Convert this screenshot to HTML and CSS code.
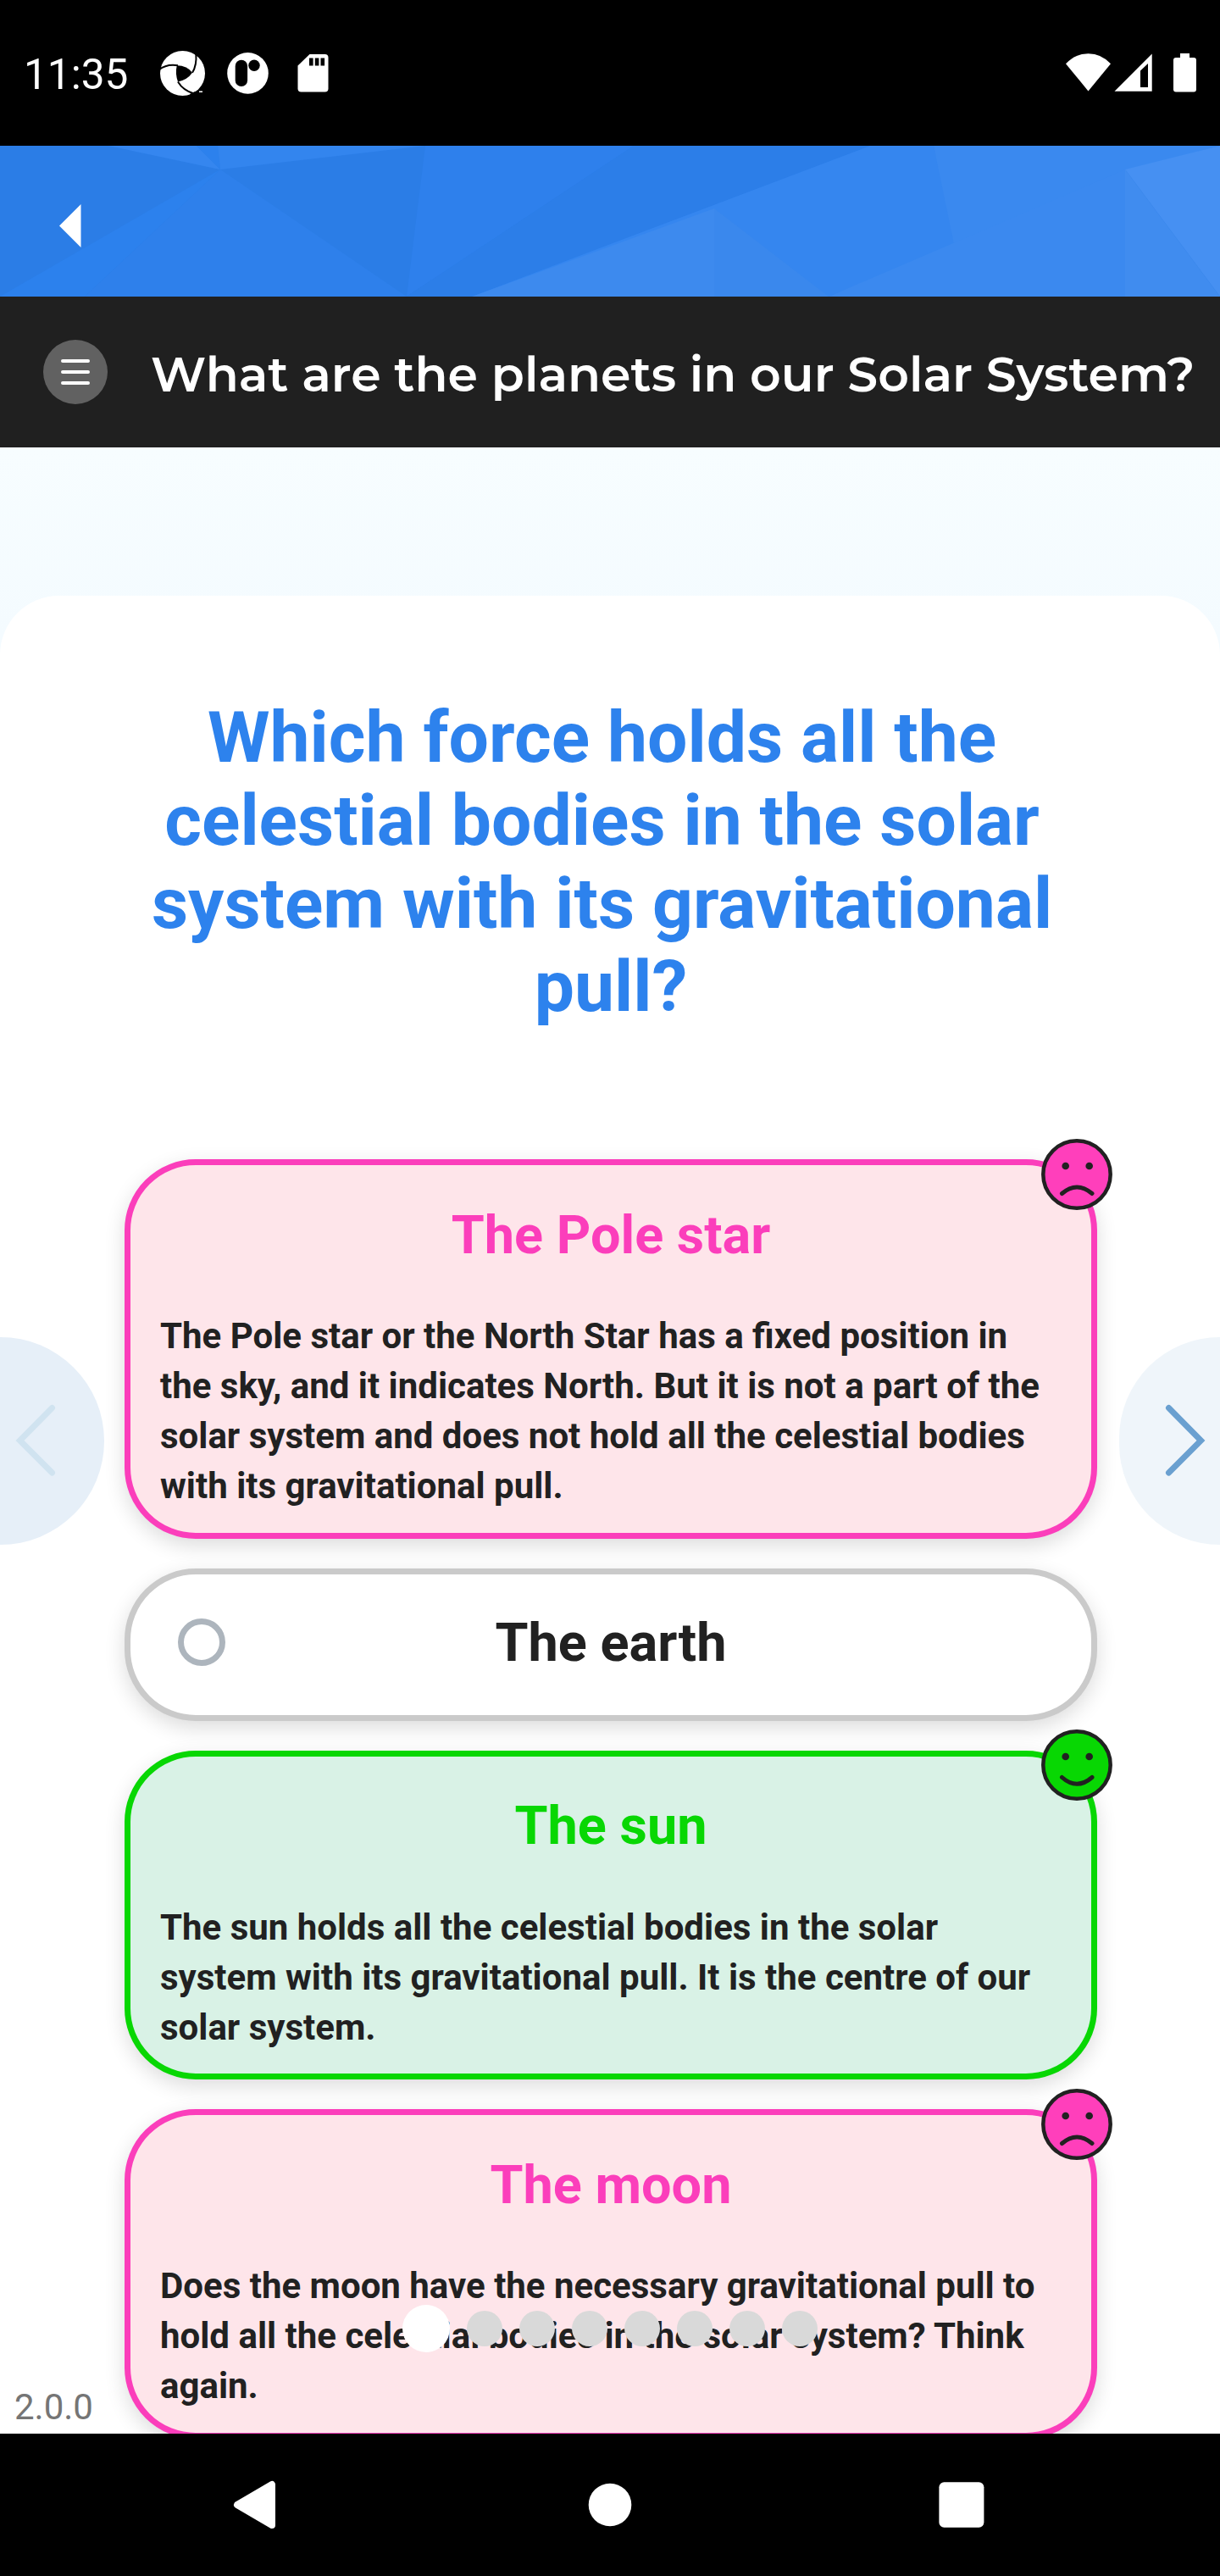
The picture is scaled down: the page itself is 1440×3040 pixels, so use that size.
FILE: index.html
```html
<!DOCTYPE html>
<html lang="en">
<head>
<meta charset="utf-8">
<title>What are the planets in our Solar System?</title>
<link rel="stylesheet" href="styles.css">
</head>
<body>
<svg class="defs" aria-hidden="true">
  <symbol id="sad" viewBox="0 0 84 84">
    <circle cx="42" cy="42" r="39.7" fill="#ff3fbb" stroke="#212121" stroke-width="4.5"/>
    <circle cx="28.7" cy="32" r="4.3" fill="#212121"/><circle cx="56.7" cy="32" r="4.3" fill="#212121"/>
    <path d="M24.5 64.5Q42 49.5 60 64.5" fill="none" stroke="#212121" stroke-width="5" stroke-linecap="round"/>
  </symbol>
  <symbol id="happy" viewBox="0 0 84 84">
    <circle cx="42" cy="42" r="39.7" fill="#08d703" stroke="#212121" stroke-width="4.5"/>
    <circle cx="28.7" cy="32" r="4.3" fill="#212121"/><circle cx="56.7" cy="32" r="4.3" fill="#212121"/>
    <path d="M24.5 56.5Q42 72 60 56.5" fill="none" stroke="#212121" stroke-width="5" stroke-linecap="round"/>
  </symbol>
</svg>

<header class="status">
  <span class="time">11:35</span>
  <svg class="status-left" width="210" height="60" viewBox="186 56 210 60">
    <circle cx="215.5" cy="86.5" r="26.5" fill="#fff"/>
    <path d="M208.8 77.3Q221 77.5 227 85.8Q221 94.5 210 96.4Q206.5 87 208.8 77.3Z"/>
    <path d="M187.5 82.5Q197 75 210 77.3M231.3 63Q232.5 77 227 85.8M210 96.4Q216 106.5 229 110.5" fill="none" stroke="#000" stroke-width="2"/>
    <path d="M224 111L230 108L240 107L236 114L226 116Z"/>
    <path d="M235 107.5h4v1.5h-4z" fill="#fff"/>
    <circle cx="292.5" cy="86.4" r="24.3" fill="#fff"/>
    <rect x="277.7" y="70.7" width="14.4" height="31.4" rx="7.2"/>
    <circle cx="300" cy="77.3" r="6.7"/>
    <path d="M365.5 64H383.5a4 4 0 0 1 4 4V104.5a4 4 0 0 1-4 4H355.5a4 4 0 0 1-4-4V77.5Z" fill="#fff"/>
    <path d="M365 68.5h4.6v9h-4.6zM371.8 68.5h4.6v9h-4.6zM378.5 68.5h4.6v9h-4.6z"/>
  </svg>
  <svg class="status-right" width="160" height="60" viewBox="1256 56 160 60" fill="#fff">
    <path d="M1284.5 107.4L1258 75.3Q1269 63.2 1284.5 63.2T1311 75.3Z"/>
    <path fill-rule="evenodd" d="M1315.5 107.7L1359.7 63.5V107.7ZM1346 103H1355V75L1346 83.5Z"/>
    <path d="M1393 63h11v5h5a3 3 0 0 1 3 3v34.5a3 3 0 0 1-3 3h-21a3 3 0 0 1-3-3V71a3 3 0 0 1 3-3h5z"/>
  </svg>
</header>

<nav class="appbar">
  <svg width="1440" height="178" viewBox="0 0 1440 178">
    <path fill="#2b7de6" d="M0 0h1440v178H0z"/>
    <path fill="#3586ef" d="M128 0H232L260 28Z"/>
    <path fill="#2c81ed" d="M232 0H257L260 28Z"/>
    <path fill="#3385ee" d="M257 0H502L260 28Z"/>
    <path fill="#2c81ed" d="M0 178L260 28L100 178Z"/>
    <path fill="#2e80eb" d="M100 178L260 28L480 178Z"/>
    <path fill="#2e80ec" d="M502 0H748L480 178Z"/>
    <path fill="#2c7ee8" d="M748 0H1027L557 178H480Z"/>
    <path fill="#3586ef" d="M1027 0H1102L1130 116L978 178H557Z"/>
    <path fill="#3d8aee" d="M557 178L843 74V178Z"/>
    <path fill="#3a88ed" d="M843 74V178H978Z"/>
    <path fill="#3a89ef" d="M1102 0H1440L1328 30L1126 116Z"/>
    <path fill="#3b89ef" d="M978 178L1328 28V178Z"/>
    <path fill="#4690f2" d="M1440 0V178L1328 28Z"/>
    <path fill="#408cef" d="M1328 28V178H1440Z"/>
    <path fill="#fff" d="M95.5 69V120L70 94.5Z"/>
  </svg>
</nav>

<div class="titlebar">
  <span class="menu"><i></i><i></i><i></i></span>
  <h1>What are the planets in our Solar System?</h1>
</div>

<main class="stage">
  <section class="sheet">
    <h2>Which force holds all the&nbsp;<br>celestial bodies in the solar&nbsp;<br>system with its gravitational&nbsp;<br>pull?</h2>
    <div class="answers">
      <article class="card wrong">
        <svg class="face"><use href="#sad"/></svg>
        <h3>The Pole star</h3>
        <p>The Pole star or the North Star has a fixed position in<br>the sky, and it indicates North. But it is not a part of the<br>solar system and does not hold all the celestial bodies<br>with its gravitational pull.</p>
      </article>
      <article class="card plain">
        <span class="radio"></span>
        <h3>The earth</h3>
      </article>
      <article class="card right">
        <svg class="face"><use href="#happy"/></svg>
        <h3>The sun</h3>
        <p>The sun holds all the celestial bodies in the solar<br>system with its gravitational pull. It is the centre of our<br>solar system.</p>
      </article>
      <article class="card wrong">
        <svg class="face"><use href="#sad"/></svg>
        <h3>The moon</h3>
        <p>Does the moon have the necessary gravitational pull to<br>hold all the celestial bodies in the solar system? Think<br>again.</p>
      </article>
    </div>
  </section>
  <div class="pager prev"><svg width="123" height="245"><path d="M61.5 83.5L23.5 122L61.5 160"/></svg></div>
  <div class="pager next"><svg width="119" height="245"><path d="M58.5 83.5L96.5 122L58.5 160"/></svg></div>
  <div class="dots"><i class="on"></i><i></i><i></i><i></i><i></i><i></i><i></i><i></i></div>
  <span class="version">2.0.0</span>
</main>

<footer class="system">
  <svg width="1440" height="168" viewBox="0 2872 1440 168" fill="#fff">
    <path d="M280 2956L321 2932V2980Z" stroke="#fff" stroke-width="8" stroke-linejoin="round"/>
    <circle cx="720" cy="2956" r="25.3"/>
    <rect x="1108.4" y="2929.3" width="53" height="53.5" rx="6"/>
  </svg>
</footer>
</body>
</html>
```
FILE: styles.css
```css
* { box-sizing: border-box; }
body {
  margin: 0;
  width: 1440px;
  height: 3040px;
  display: flex;
  flex-direction: column;
  overflow: hidden;
  background: #000;
  font-family: Roboto, sans-serif;
  color: #212121;
}
svg { display: block; }
h1, h2, h3, p { margin: 0; }
.defs { position: absolute; width: 0; height: 0; }

.status {
  height: 172px;
  padding: 0 24px 0 28px;
  display: flex;
  align-items: center;
  color: #fff;
}
.time { width: 158px; font-size: 49.5px; line-height: 58px; padding-top: 3px; }
.status-right { margin-left: auto; }

.appbar { height: 178px; }

.titlebar {
  height: 178px;
  padding-left: 51px;
  display: flex;
  align-items: center;
  background: #202020;
}
.menu {
  width: 76px;
  height: 76px;
  border-radius: 50%;
  background: #616161;
  display: flex;
  flex-direction: column;
  align-items: center;
  justify-content: center;
  gap: 9.3px;
}
.menu i { width: 34px; height: 3.5px; border-radius: 2px; background: #fff; }
.titlebar h1 {
  margin-left: 51px;
  padding-top: 5px;
  color: #fff;
  font: 600 57px/70px Montserrat, Inter, sans-serif;
  white-space: nowrap;
}

.stage {
  position: relative;
  height: 2344px;
  padding-top: 175px;
  overflow: hidden;
  background: linear-gradient(#f7fdff, #f4fbff 220px);
}
.sheet {
  height: 2400px;
  padding: 119px 145px 0 147px;
  border-radius: 70px 70px 0 0;
  background: #fff;
}
.sheet h2 {
  color: #2d82ed;
  font-size: 84px;
  line-height: 98px;
  font-weight: 700;
  text-align: center;
  white-space: nowrap;
}
.answers {
  margin-top: 154px;
  display: flex;
  flex-direction: column;
  gap: 35px;
}
.card {
  position: relative;
  border: 7px solid;
  border-radius: 84px;
  padding: 38.5px 35px 25.5px;
  box-shadow: 0 8px 24px rgba(0, 0, 0, .14);
}
.card h3 {
  font-size: 63px;
  line-height: 88px;
  font-weight: 700;
  text-align: center;
}
.card p {
  margin-top: 45.5px;
  font-size: 42px;
  line-height: 59px;
  font-weight: 700;
  color: #212121;
  white-space: nowrap;
}
.wrong { border-color: #fb3ebb; background: #fee5ea; color: #fb3ebb; }
.right { border-color: #08d703; background: #d9f2e6; color: #08d703; }
.plain {
  height: 180px;
  padding: 0 56px 6px;
  border-color: #cacaca;
  background: #fff;
  display: flex;
  align-items: center;
}
.plain h3 { flex: 1; margin-right: 56px; padding-top: 3px; }
.radio { width: 56px; height: 56px; border: 7px solid #adb5bd; border-radius: 50%; }
.face { position: absolute; top: -31.5px; right: -25px; width: 84px; height: 84px; }

.pager { position: absolute; top: 1049.5px; height: 245px; }
.pager path { fill: none; stroke-width: 7; stroke-linecap: round; stroke-linejoin: miter; }
.prev { left: 0; border-radius: 0 123px 123px 0; background: #e6eff8; }
.prev path { stroke: #d0e3f0; }
.next { right: 0; border-radius: 123px 0 0 123px; background: #eff5fa; }
.next path { stroke: #6aa0d0; }

.dots {
  position: absolute;
  top: 2192px;
  left: 475px;
  display: flex;
  align-items: center;
  gap: 20px;
}
.dots i { width: 42px; height: 42px; border-radius: 50%; background: #d9d9d9; }
.dots .on { width: 56px; height: 56px; background: #fff; }
.version {
  position: absolute;
  left: 17px;
  top: 2288px;
  font-size: 42px;
  line-height: 49px;
  color: #757575;
}
.system { height: 168px; }
```
